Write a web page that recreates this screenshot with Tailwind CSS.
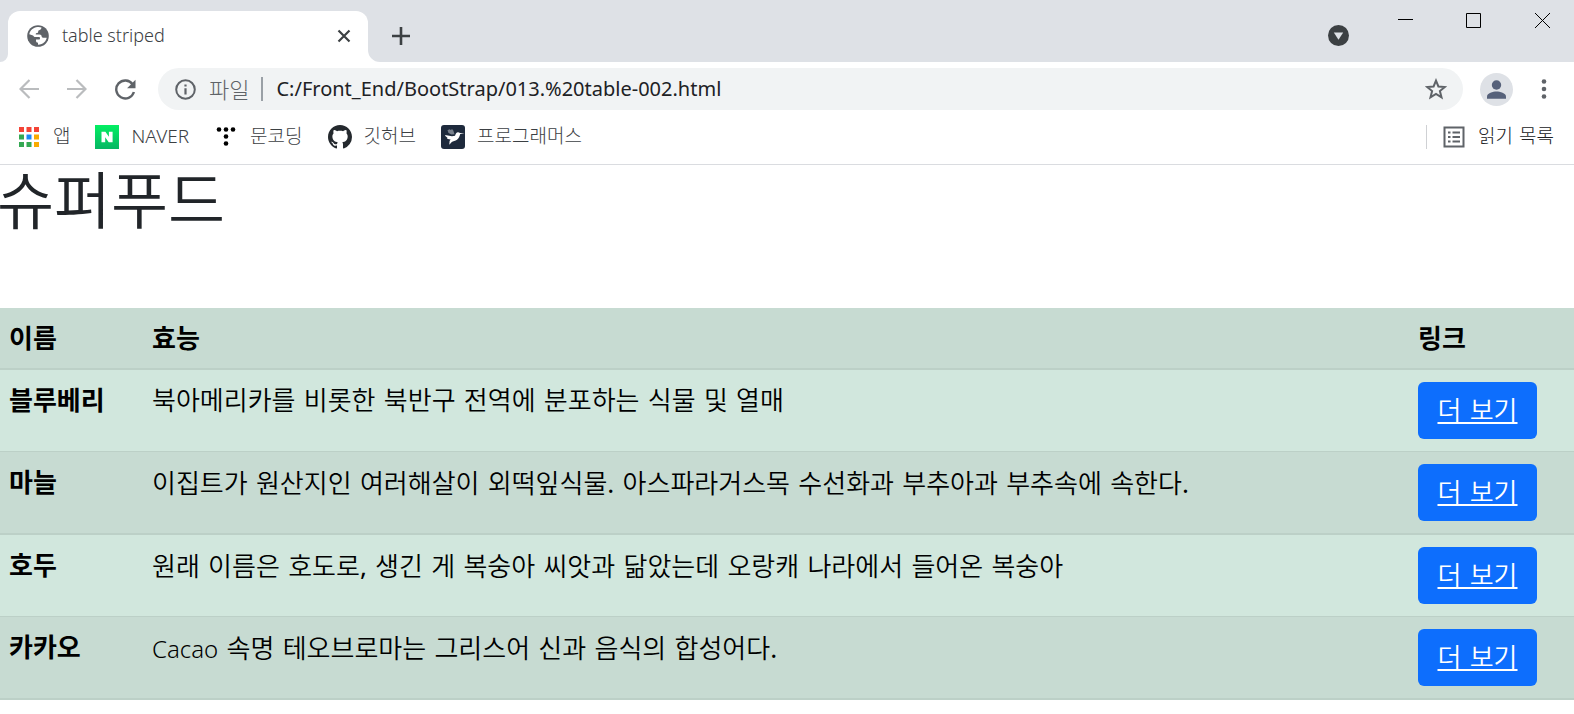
<!DOCTYPE html>
<html lang="ko">
<head>
<meta charset="utf-8">
<title>table striped</title>
<script src="https://cdn.jsdelivr.net/npm/@tailwindcss/browser@4"></script>
</head>
<body class="min-h-screen bg-white font-['Noto_Sans','Noto_Sans_CJK_KR',sans-serif] text-[#3c4043]">
<header>
  <div class="flex h-[62px] bg-[#dee1e6]">
    <div class="relative ml-2 mt-[11px] flex w-[360px] items-center rounded-t-xl bg-white pb-[2px] pl-[19px] pr-4">
      <svg class="absolute bottom-0 -left-2 size-2" viewBox="0 0 8 8" fill="#fff" aria-hidden="true"><path d="M8 0v8H0a8 8 0 0 0 8-8z"/></svg>
      <svg class="absolute bottom-0 -right-3 size-3" viewBox="0 0 12 12" fill="#fff" aria-hidden="true"><path d="M0 0v12h12A12 12 0 0 1 0 0z"/></svg>
      <svg class="size-[22px]" viewBox="0 0 22 22" aria-hidden="true"><circle cx="11" cy="11" r="10.800" fill="#5f6368"/><path d="M10.500 2c1.400-.2 2.800 0 4 .6-.2 1.500-.8 2.400-2.300 2.600-.9.200-1 .8-1 1.500 0 .9-.6 1.300-1.500 1.400-.8.100-1 .5-.9 1.300h3.700c1.400 0 2.100.9 2.200 2.200.1.800.5 1.100 1.300 1.100h3.700c-.3 1.700-1.100 3.200-2.200 4.300-1.700 1.800-4 2.800-6.500 2.800v-2.100c-1.300 0-2-.8-2-2v-1.200h2.800c.9 0 1.200-.4 1.200-1.200 0-.9-.4-1.200-1.200-1.200H8.700c-1.500 0-2-.9-2.700-1.700L2.300 9.200C3 5.400 6.300 2.400 10.500 2z" fill="#fff"/></svg>
      <span class="ml-[13px] text-[18px] font-light">table striped</span>
      <button class="ml-auto" aria-label="탭 닫기"><svg class="size-4" viewBox="0 0 16 16" stroke="#3c4043" stroke-width="2.200" fill="none"><path d="M2.500 2.500l11 11m0-11l-11 11"/></svg></button>
    </div>
    <button class="mb-[2px] ml-6 mt-[11px]" aria-label="새 탭"><svg class="size-[18px]" viewBox="0 0 18 18" stroke="#3c4043" stroke-width="2.600" fill="none"><path d="M0 9h18M9 0v18"/></svg></button>
    <div class="ml-auto flex items-start">
      <button class="mr-[49px] mt-[25px]" aria-label="탭 검색"><svg class="size-[21px]" viewBox="0 0 21 21"><circle cx="10.500" cy="10.500" r="10.500" fill="#3c4043"/><path d="M5.800 7.500h9.400l-4.700 7.300z" fill="#dee1e6"/></svg></button>
      <button class="mr-[53px] mt-3" aria-label="최소화"><svg class="size-[15px]" viewBox="0 0 15 15"><path d="M0 7.500h15" stroke="#000"/></svg></button>
      <button class="mr-[54px] mt-[13px]" aria-label="최대화"><svg class="size-[15px]" viewBox="0 0 15 15"><path d="M.5.5h14v14H.5z" fill="none" stroke="#000"/></svg></button>
      <button class="mr-6 mt-[13px]" aria-label="닫기"><svg class="size-[15px]" viewBox="0 0 15 15"><path d="M0 0l15 15M15 0L0 15" stroke="#000"/></svg></button>
    </div>
  </div>
  <div class="flex h-[54px] items-center pl-[19px] pr-[27px]">
    <button aria-label="뒤로"><svg class="size-5" viewBox="0 0 20 20" fill="none" stroke="#babcbe" stroke-width="2.200"><path d="M20 10H2M10.500 1L1.500 10l9 9"/></svg></button>
    <button class="ml-7" aria-label="앞으로"><svg class="size-5" viewBox="0 0 20 20" fill="none" stroke="#babcbe" stroke-width="2.200"><path d="M0 10h18M9.500 1l9 9-9 9"/></svg></button>
    <button class="ml-7" aria-label="새로고침"><svg class="size-[21px]" viewBox="0 0 21 21"><path d="M17.600 5.200A9 9 0 1 0 18.900 13" fill="none" stroke="#5f6368" stroke-width="2.400"/><path d="M20.500.8v8.400h-8.400z" fill="#5f6368"/></svg></button>
    <div class="ml-[22px] flex h-[42px] flex-1 items-center rounded-full bg-[#f1f3f4] pl-[17px] pr-4">
      <svg class="size-[21px] shrink-0" viewBox="0 0 21 21" aria-hidden="true"><circle cx="10.500" cy="10.500" r="9.300" fill="none" stroke="#5f6368" stroke-width="2"/><path d="M9.400 9.300h2.200v6.200H9.400zM9.400 5.400h2.200v2.200H9.400z" fill="#5f6368"/></svg>
      <label for="url" class="ml-[13px] text-[22px] font-light text-[#5f6368]">파일</label>
      <span class="ml-3 h-6 w-[2px] bg-[#9aa0a6]"></span>
      <input id="url" class="ml-[13px] min-w-0 flex-1 bg-transparent text-[20px] text-[#202124] outline-none" value="C:/Front_End/BootStrap/013.%20table-002.html">
      <button aria-label="북마크"><svg class="size-[22px]" viewBox="0 0 22 22" fill="none" stroke="#5f6368" stroke-width="2"><path d="M11 2.600l2.400 5.900 6.400.5-4.900 4.100 1.600 6.200L11 15.900l-5.500 3.400 1.600-6.200L2.200 9l6.400-.5z"/></svg></button>
    </div>
    <button class="ml-[17px]" aria-label="프로필"><svg class="size-[33px]" viewBox="0 0 33 33"><circle cx="16.500" cy="16.500" r="16.500" fill="#dee1e6"/><circle cx="16.500" cy="12" r="4.700" fill="#56617a"/><path d="M7 25.800v-2.300c0-3.300 6-5 9.500-5s9.500 1.700 9.500 5v2.300z" fill="#56617a"/></svg></button>
    <button class="ml-7" aria-label="메뉴"><svg class="h-5 w-[6px]" viewBox="0 0 6 20" fill="#5f6368"><circle cx="3" cy="2.500" r="2.300"/><circle cx="3" cy="10" r="2.300"/><circle cx="3" cy="17.500" r="2.300"/></svg></button>
  </div>
  <nav class="flex h-[49px] items-center border-b border-[#dadce0] pb-[7px] pl-[19px] pr-5 text-[19px] font-light">
    <a href="#" class="flex items-center gap-[14px]">
      <svg class="size-5" viewBox="0 0 20 20" aria-hidden="true"><path d="M0 0h5v5H0zM7.500 0h5v5h-5zM15 0h5v5h-5z" fill="#f44336"/><path d="M0 7.500h5v5H0zM0 15h5v5H0zM7.500 15h5v5h-5z" fill="#34a853"/><path d="M7.500 7.500h5v5h-5z" fill="#1e88f5"/><path d="M15 7.500h5v5h-5zM15 15h5v5h-5z" fill="#f9ab00"/></svg>앱</a>
    <a href="#" class="ml-[25px] flex items-center gap-3">
      <svg class="size-6" viewBox="0 0 24 24" aria-hidden="true"><defs><linearGradient id="g" x2="0" y2="1"><stop stop-color="#03ef63"/><stop offset="1" stop-color="#06b663"/></linearGradient></defs><path d="M0 0h24v24H0z" fill="url(#g)"/><path d="M6.500 6.800h3.900l3.500 5V6.800h3.700v10.400h-3.900l-3.500-5v5H6.500z" fill="#fff"/></svg>NAVER</a>
    <a href="#" class="ml-[27px] flex items-center gap-[14px]">
      <svg class="h-[19px] w-5" viewBox="0 0 20 19" aria-hidden="true"><circle cx="3" cy="2.500" r="2.300"/><circle cx="10" cy="2.500" r="2.300"/><circle cx="17" cy="2.500" r="2.300"/><circle cx="10" cy="9.500" r="2.300"/><circle cx="10" cy="16.500" r="2.300"/></svg>문코딩</a>
    <a href="#" class="ml-[25px] flex items-center gap-3">
      <svg class="size-6" viewBox="0 0 16 16" fill="#24292e" aria-hidden="true"><path d="M8 0C3.580 0 0 3.580 0 8c0 3.540 2.290 6.530 5.470 7.590.4.070.55-.17.55-.38 0-.19-.01-.82-.01-1.490-2.010.37-2.530-.49-2.690-.94-.09-.23-.48-.94-.82-1.130-.28-.15-.68-.52-.01-.53.63-.01 1.080.58 1.230.82.72 1.210 1.870.87 2.330.66.070-.52.28-.87.51-1.070-1.780-.2-3.640-.89-3.640-3.950 0-.87.31-1.590.82-2.150-.08-.2-.36-1.020.08-2.120 0 0 .67-.21 2.200.82.64-.18 1.320-.27 2-.27s1.360.09 2 .27c1.530-1.040 2.200-.82 2.200-.82.44 1.100.16 1.920.08 2.120.51.56.82 1.270.82 2.150 0 3.070-1.870 3.750-3.650 3.950.29.25.54.73.54 1.480 0 1.070-.01 1.930-.01 2.200 0 .21.15.46.55.38A8.010 8.010 0 0 0 16 8c0-4.420-3.580-8-8-8z"/></svg>깃허브</a>
    <a href="#" class="ml-[25px] flex items-center gap-3">
      <svg class="size-6" viewBox="0 0 24 24" aria-hidden="true"><rect width="24" height="24" rx="3" fill="#1e2a3c"/><path d="M6.500 5.200l2-.9 1.500.7 1-.9 1.300 1.500 1.200 3.600-3 .3-3-1.500z" fill="#78808c"/><path d="M4 10l7 1.300 3-.5c.5-2 1.500-3.600 3-3.600.9 0 1.500.4 1.900.8l4.600.2-4.300.8c-.7 2.300-1.200 4.300-3.200 5.800-1.500 1.200-4.200 1.500-5.200 2.300L8.300 19.700l.3-3.600 1-1.600c-2.200 0-3.400-.7-3.900-1.700l1-.3C5.100 12 4.300 11.100 4 10z" fill="#fff"/></svg>프로그래머스</a>
    <a href="#" class="ml-auto flex items-center gap-[13px] font-['DejaVu_Sans','Noto_Sans_CJK_KR',sans-serif] text-[#202124]">
      <span class="mr-[3px] h-6 w-px bg-[#cfd1d4]"></span>
      <svg class="size-[22px]" viewBox="0 0 22 22" fill="none" stroke="#5f6368" stroke-width="2" aria-hidden="true"><path d="M1.500 1.500h19v19h-19z"/><path d="M5 6.500h2.500M9.500 6.500H17M5 11h2.500M9.500 11H17M5 15.500h2.500M9.500 15.500H17"/></svg>읽기 목록</a>
  </nav>
</header>
<main class="-ml-[3px] font-['DejaVu_Sans','Noto_Sans_CJK_KR',sans-serif]">
  <h1 class="mb-[67px] text-[62px] leading-[76px] font-[350] text-[#212529]">슈퍼푸드</h1>
  <table class="w-full table-fixed border-collapse text-left align-top text-[26px] leading-9 text-black">
    <colgroup><col class="w-[143px]"><col><col class="w-[168px]"></colgroup>
    <thead>
      <tr class="border-b-2 border-[#bcd0c7] bg-[#c7dbd2] align-top">
        <th class="px-3 pt-[13px] pb-[11px] font-bold">이름</th><th class="px-3 pt-[13px] pb-[11px] font-bold">효능</th><th class="px-3 pt-[13px] pb-[11px] font-bold">링크</th>
      </tr>
    </thead>
    <tbody class="font-[350]">
      <tr class="border-b border-[#bcd0c7] bg-[#d1e7dd] align-top">
        <th class="px-3 pt-[13px] pb-[11px] font-bold">블루베리</th><td class="px-3 pt-[13px] pb-[11px]">북아메리카를 비롯한 북반구 전역에 분포하는 식물 및 열매</td>
        <td class="px-3 py-3"><a href="#" class="flex h-[57px] w-[119px] items-center justify-center rounded-md bg-[#0d6efd] text-white underline">더 보기</a></td>
      </tr>
      <tr class="border-b-2 border-[#bcd0c7] bg-[#c7dbd2] align-top">
        <th class="px-3 pt-[13px] pb-[11px] font-bold">마늘</th><td class="px-3 pt-[13px] pb-[11px]">이집트가 원산지인 여러해살이 외떡잎식물<span class="font-['Noto_Sans',sans-serif] font-normal">.</span> 아스파라거스목 수선화과 부추아과 부추속에 속한다<span class="font-['Noto_Sans',sans-serif] font-normal">.</span></td>
        <td class="px-3 py-3"><a href="#" class="flex h-[57px] w-[119px] items-center justify-center rounded-md bg-[#0d6efd] text-white underline">더 보기</a></td>
      </tr>
      <tr class="border-b border-[#bcd0c7] bg-[#d1e7dd] align-top">
        <th class="px-3 pt-[13px] pb-[11px] font-bold">호두</th><td class="px-3 pt-[13px] pb-[11px]">원래 이름은 호도로<span class="font-['Noto_Sans',sans-serif] font-normal">,</span> 생긴 게 복숭아 씨앗과 닮았는데 오랑캐 나라에서 들어온 복숭아</td>
        <td class="px-3 py-3"><a href="#" class="flex h-[57px] w-[119px] items-center justify-center rounded-md bg-[#0d6efd] text-white underline">더 보기</a></td>
      </tr>
      <tr class="border-b-2 border-[#bcd0c7] bg-[#c7dbd2] align-top">
        <th class="px-3 pt-[13px] pb-[11px] font-bold">카카오</th><td class="px-3 pt-[13px] pb-[11px]"><span class="font-['Noto_Sans',sans-serif] text-2xl leading-9">Cacao</span> 속명 테오브로마는 그리스어 신과 음식의 합성어다<span class="font-['Noto_Sans',sans-serif] font-normal">.</span></td>
        <td class="px-3 py-3"><a href="#" class="flex h-[57px] w-[119px] items-center justify-center rounded-md bg-[#0d6efd] text-white underline">더 보기</a></td>
      </tr>
    </tbody>
  </table>
</main>
</body>
</html>
